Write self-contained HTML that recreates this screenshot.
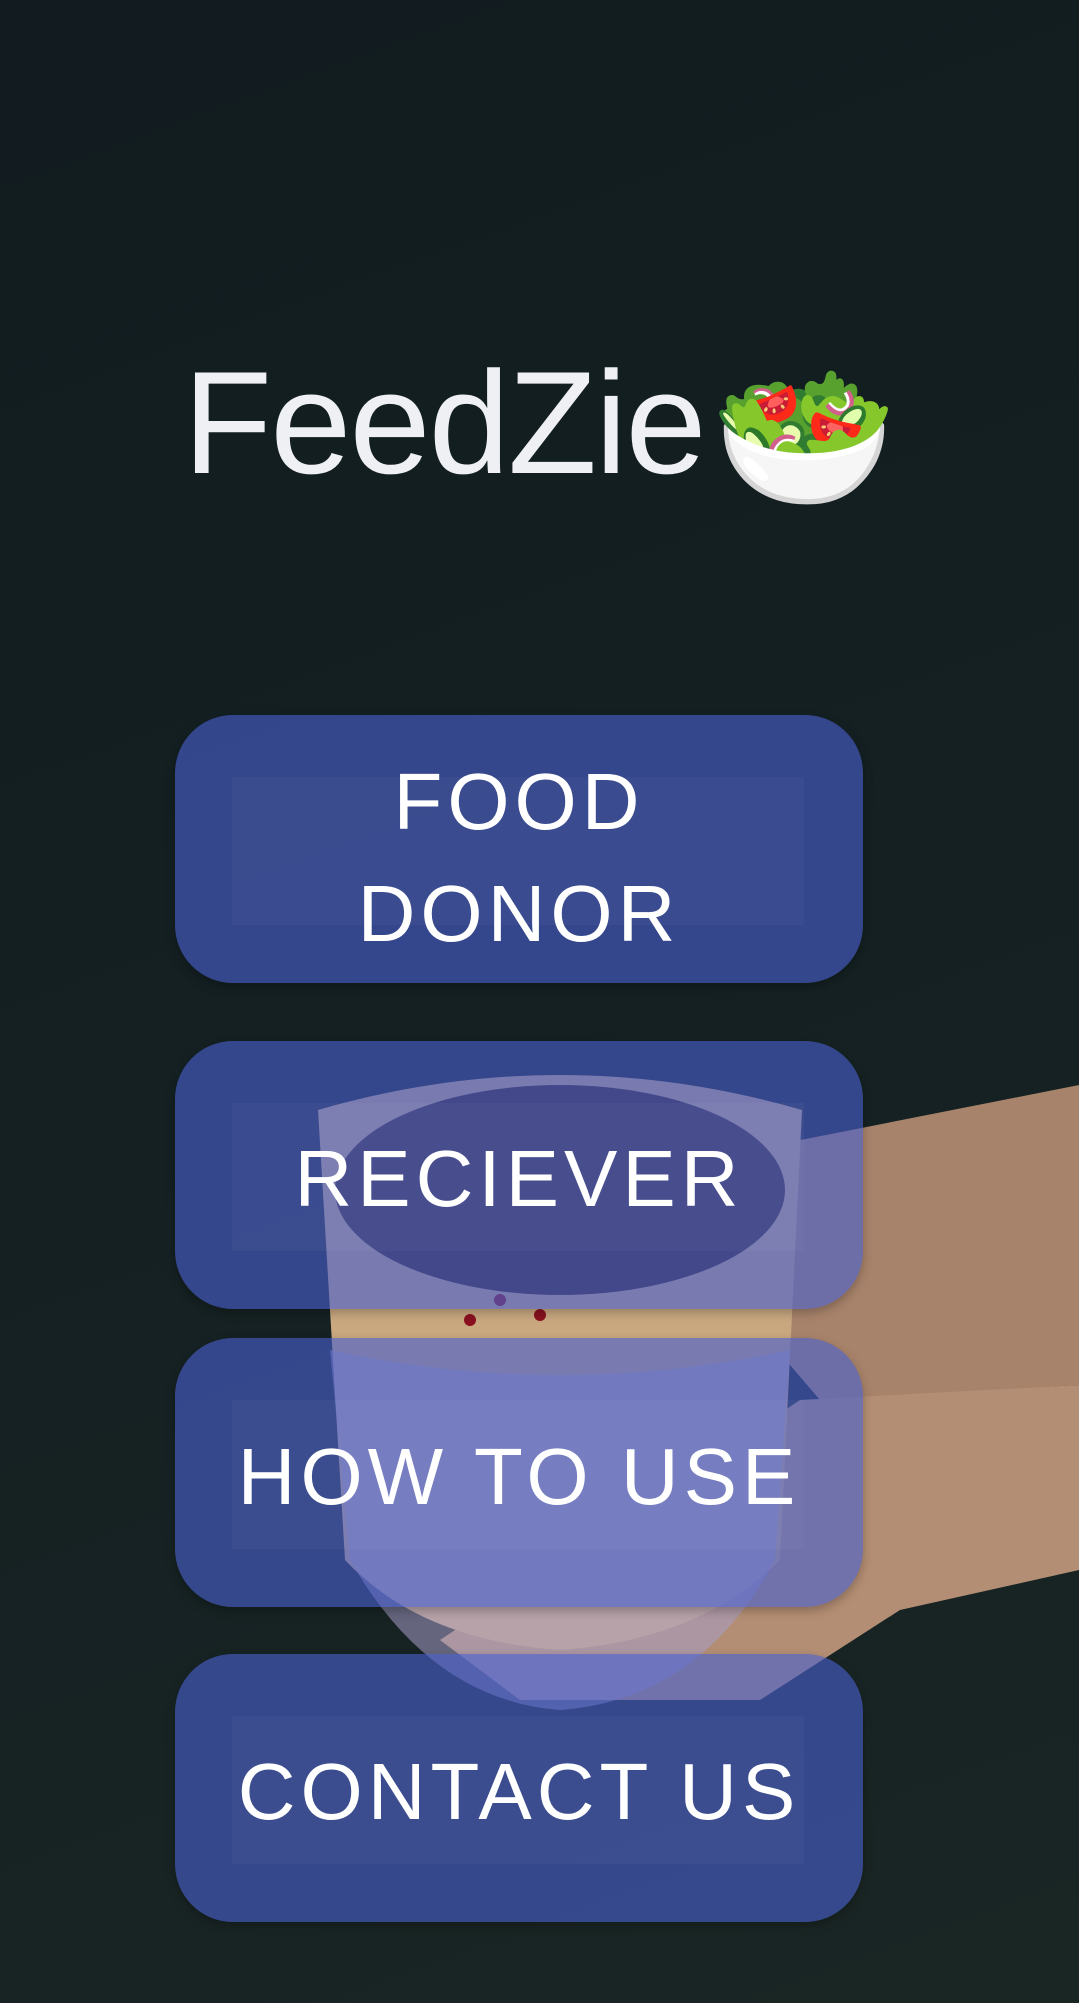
<!DOCTYPE html>
<html><head><meta charset="utf-8"><style>
html,body{margin:0;padding:0}
body{width:1079px;height:2003px;position:relative;overflow:hidden;background:linear-gradient(160deg,#121c20 0%,#142022 50%,#1a2624 100%);font-family:"Liberation Sans",sans-serif}
.t{position:absolute;left:183px;top:350px;font-size:146px;color:#eef0f4;font-weight:300;letter-spacing:-2px;line-height:1}
.b{position:absolute;left:175px;width:688px;border-radius:58px;background:rgba(72,96,205,0.62);box-shadow:0 4px 10px rgba(0,0,0,.25)}
.in{position:absolute;left:57px;right:59px;top:62px;bottom:58px;background:rgba(255,255,255,0.03)}
.lbl{position:absolute;left:0;right:0;top:0;bottom:0;display:flex;align-items:center;justify-content:center;text-align:center;color:#fff;font-size:80px;letter-spacing:5px;line-height:112px;font-weight:300}
</style></head><body>
<svg style="position:absolute;left:0;top:0" width="1079" height="2003">
<path d="M750 1150 L1079 1085 L1079 1385 L820 1400 L760 1330Z" fill="#a8836b"/>
<path d="M800 1400 L1079 1385 L1079 1570 L900 1610 L760 1700 L520 1700 L440 1640Z" fill="#b48e74"/>
<path d="M318 1110 Q560 1040 802 1110 L780 1560 Q700 1640 560 1650 Q420 1640 345 1560Z" fill="#c9a880"/>
<ellipse cx="560" cy="1190" rx="225" ry="105" fill="#3a2420"/>
<circle cx="500" cy="1300" r="6" fill="#8a1020"/><circle cx="540" cy="1315" r="6" fill="#8a1020"/><circle cx="470" cy="1320" r="6" fill="#8a1020"/>
<path d="M330 1350 Q560 1400 790 1350 L775 1560 Q700 1700 560 1710 Q430 1700 350 1560Z" fill="#a69cc8" opacity=".55"/>
</svg>
<div class="t">FeedZie<span style="font-size:150px;vertical-align:top;position:relative;top:12px;margin-left:6px">🥗</span></div>
<div class="b" style="top:715px;height:268px"><div class="in"></div><div class="lbl" style="padding-top:18px">FOOD<br>DONOR</div></div>
<div class="b" style="top:1041px;height:268px"><div class="in"></div><div class="lbl" style="padding-top:8px">RECIEVER</div></div>
<div class="b" style="top:1338px;height:269px"><div class="in"></div><div class="lbl" style="padding-top:8px">HOW TO USE</div></div>
<div class="b" style="top:1654px;height:268px"><div class="in"></div><div class="lbl" style="padding-top:8px">CONTACT US</div></div>
</body></html>
